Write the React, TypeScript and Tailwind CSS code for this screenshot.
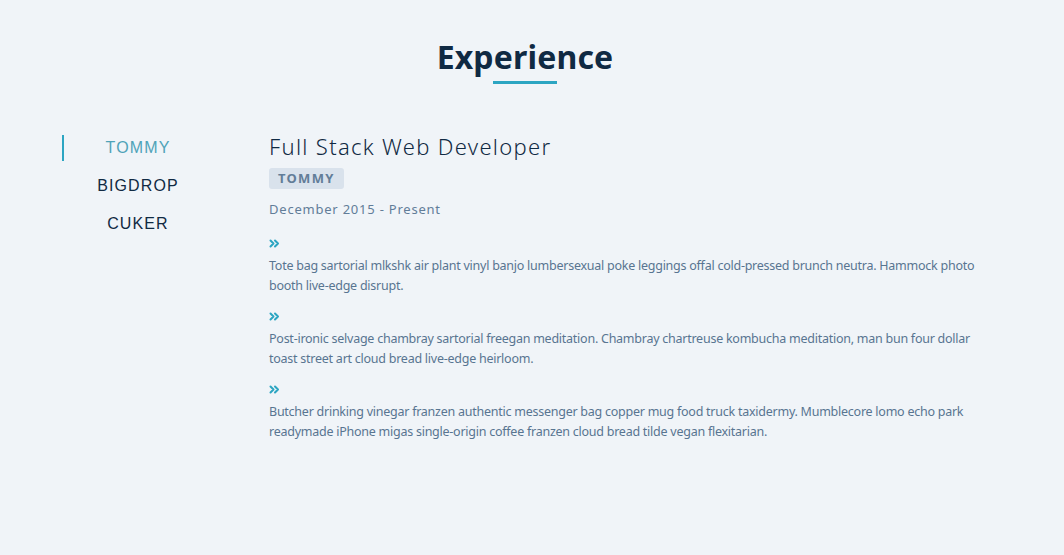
import { useState } from "react";

const jobs = [
  {
    company: "TOMMY",
    title: "Full Stack Web Developer",
    dates: "December 2015 - Present",
    duties: [
      "Tote bag sartorial mlkshk air plant vinyl banjo lumbersexual poke leggings offal cold-pressed brunch neutra. Hammock photo booth live-edge disrupt.",
      "Post-ironic selvage chambray sartorial freegan meditation. Chambray chartreuse kombucha meditation, man bun four dollar toast street art cloud bread live-edge heirloom.",
      "Butcher drinking vinegar franzen authentic messenger bag copper mug food truck taxidermy. Mumblecore lomo echo park readymade iPhone migas single-origin coffee franzen cloud bread tilde vegan flexitarian.",
    ],
  },
  { company: "BIGDROP", title: "", dates: "", duties: [] },
  { company: "CUKER", title: "", dates: "", duties: [] },
];

function Chevrons() {
  return (
    <svg width="11" height="9" viewBox="0 0 11 9" className="text-[#2ca5c2]">
      <path d="M1.5 1.5 L4.5 4.5 L1.5 7.5 M6 1.5 L9 4.5 L6 7.5" fill="none" stroke="currentColor" strokeWidth="2" strokeLinecap="round" strokeLinejoin="round" />
    </svg>
  );
}

export default function App() {
  const [active, setActive] = useState(0);
  const job = jobs[active];

  return (
    <section className="min-h-[555px] w-full bg-[#f0f4f8] pt-[34px] font-['Noto_Sans','Open_Sans',sans-serif]">
      {/* Title */}
      <div className="flex flex-col items-center pr-[14px]">
        <h2 className="text-[32px] font-bold leading-[46px] tracking-[0.005em] text-[#102a43]">Experience</h2>
        <div className="mt-[1px] h-[3px] w-[64px] bg-[#2ca5c2]" />
      </div>

      <div className="mt-[51px] flex pl-[62px]">
        {/* Companies */}
        <div className="flex w-[150px] shrink-0 flex-col gap-[12px]">
          {jobs.map((j, i) => (
            <button
              key={j.company}
              onClick={() => setActive(i)}
              className={`h-[26px] border-l-2 font-['Liberation_Sans',Arial,sans-serif] text-[16px] leading-[26px] tracking-[0.07em] ${
                i === active ? "border-[#2ca5c2] text-[#4fa3b8]" : "border-transparent text-[#102a43]"
              }`}
            >
              {j.company}
            </button>
          ))}
        </div>

        {/* Job info */}
        <article className="ml-[57px] w-[720px]">
          <h3 className="-mt-[2px] text-[22px] font-light leading-[26px] tracking-[0.06em] text-[#102a43]">{job.title}</h3>
          <span className="mt-[9px] inline-block rounded-[3px] bg-[#d9e2ec] px-[9px] text-[13px] font-bold leading-[21px] tracking-[0.1em] text-[#627d98]">
            {job.company}
          </span>
          <p className="mt-[10px] text-[13px] leading-[20px] tracking-[0.06em] text-[#627d98]">{job.dates}</p>
          <div className="mt-[18px] flex flex-col gap-[14px]">
            {job.duties.map((d) => (
              <div key={d}>
                <div className="flex h-[13px] items-center">
                  <Chevrons />
                </div>
                <p className="mt-[6px] text-[12.5px] leading-[20px] tracking-[-0.02em] text-[#587591]">{d}</p>
              </div>
            ))}
          </div>
        </article>
      </div>
    </section>
  );
}
